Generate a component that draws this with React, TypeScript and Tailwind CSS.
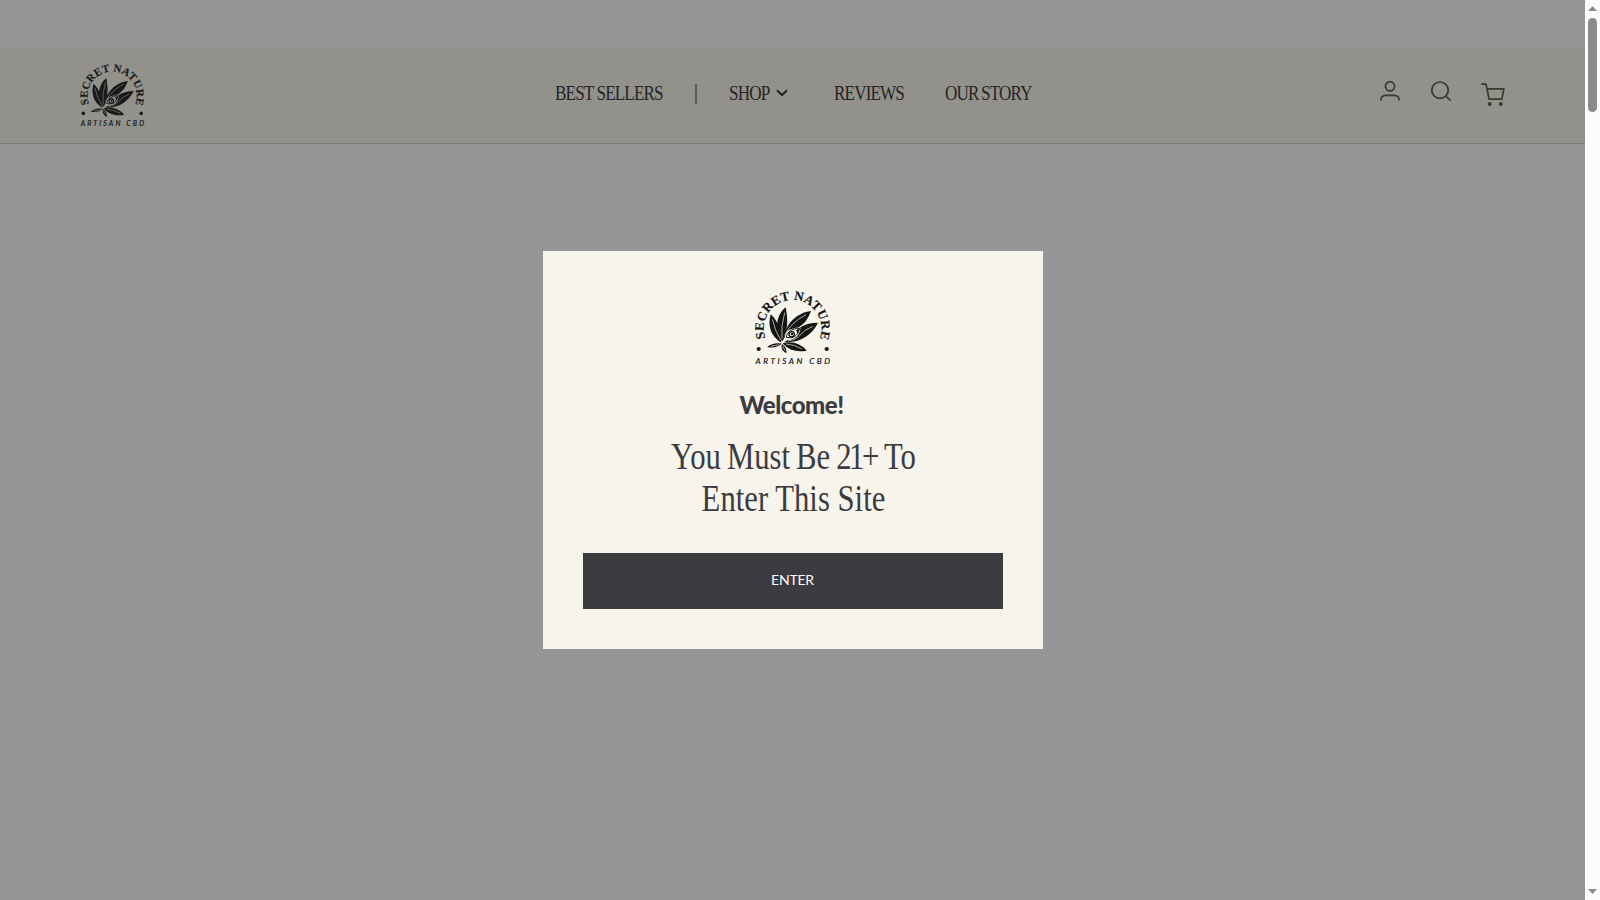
import { clsx } from 'clsx';

interface LogoProps {
  id: string;
  className?: string;
}

function Logo({ id, className }: LogoProps) {
  return (
    <svg viewBox="0 0 76 74" className={clsx('overflow-visible', className)} fill="currentColor">
      <path id={id} d="M10.4 47.2 A28.8 28.8 0 1 1 64.8 47.2" fill="none" />
      <text className="font-['Liberation_Serif'] text-[12.8px] font-bold" stroke="currentColor" strokeWidth="0.2">
        <textPath href={`#${id}`} textLength="110">
          SECRET NATURE
        </textPath>
      </text>
      <circle cx="3.7" cy="58" r="2.1" />
      <circle cx="71.7" cy="58" r="2.1" />

      {/* Leaf */}
      <g transform="scale(0.3333) translate(-45 -33)">
        <path d="M92 103 C83 135 90 168 124 188 C124 155 114 122 92 103Z" />
        <path d="M137 82 C108 105 102 150 127 184 C143 155 145 120 137 82Z" />
        <path d="M213 93 C172 98 134 130 130 182 C134 172 136 162 140 156 C149 144 166 146 178 140 C196 130 206 112 213 93Z" />
        <path d="M234 128 C214 128 196 132 181 142 C183 158 170 177 150 180 C142 180 138 182 133 186 C180 190 215 165 234 128Z" />
        <path d="M128 190 C150 181 184 190 200 212 C170 218 145 210 128 190Z" />
        <path d="M82 201 C94 190 110 188 125 191 C114 201 98 205 82 201Z" />
        <path d="M126 192 C122 203 127 214 139 220 C141 208 136 199 126 192Z" />

        {/* Eye */}
        <path d="M139 172 C141 154 156 147 178 144 C176 163 162 178 139 172Z" fill="none" stroke="currentColor" strokeWidth="3" />
        <circle cx="155" cy="163" r="8" fill="none" stroke="currentColor" strokeWidth="4" />
        <circle cx="156" cy="162" r="4" />
        <path d="M168 151 L180 144 L174 162Z" />
      </g>
      <g transform="scale(0.3333) translate(-45 -33)" fill="none" className="stroke-[var(--vein)]" strokeWidth="2">
        <path d="M97 118 Q106 155 122 180 M134 98 Q122 140 126 176 M198 104 Q150 130 134 166 M218 139 Q192 150 184 162 Q168 180 144 183 M138 192 Q165 194 186 207 M92 199 L118 194 M128 198 L135 212" />
      </g>

      <text
        x="0.6"
        y="73"
        textLength="74.5"
        stroke="currentColor"
        strokeWidth="0.2"
        className="font-[Lato] text-[8.2px] italic"
      >
        ARTISAN CBD
      </text>
    </svg>
  );
}

interface NavLabelProps {
  label: string;
  width: string;
}

// Condensed serif label, squeezed into its own box
function NavLabel({ label, width }: NavLabelProps) {
  return (
    <a href="#" className={clsx('block whitespace-nowrap tracking-[-1px]', width)}>
      <span className="inline-block origin-left scale-x-[0.855]">{label}</span>
    </a>
  );
}

function Header() {
  return (
    <header className="h-24 shrink-0 flex items-center justify-between border-b border-[#7f7c70] bg-[#92918b] pl-20 pr-20">
      <Logo id="header-arc" className="w-[65px] h-[63px] text-[#191919] [--vein:#92918b]" />

      <nav className="flex items-center ml-[61px] -mt-[5px] font-['Liberation_Serif'] text-[20px] leading-6 text-[#242427]">
        <NavLabel label="BEST SELLERS" width="w-[108px]" />
        <span className="mt-[2px] mx-8 h-5 w-[2px] bg-[#59595a]" />
        <NavLabel label="SHOP" width="w-[40px]" />
        <svg viewBox="0 0 12 8" className="ml-[7px] w-3 h-2" fill="none" stroke="currentColor" strokeWidth="2">
          <path d="M1 1.2 L6 6 L11 1.2" />
        </svg>
        <NavLabel label="REVIEWS" width="ml-[46px] w-[70px]" />
        <NavLabel label="OUR STORY" width="ml-[41px] w-[86px] [word-spacing:-1px]" />
      </nav>

      <div className="-mt-1 flex items-start text-[#3a382d]">
        <svg viewBox="0 0 20 20" className="w-5 h-5" fill="none" stroke="currentColor" strokeWidth="1.7">
          <circle cx="10" cy="5.3" r="4.6" />
          <path d="M0.9 19.4 V18.7 A4.4 4.4 0 0 1 5.3 14.3 H14.7 A4.4 4.4 0 0 1 19.1 18.7 V19.4" />
        </svg>
        <svg viewBox="0 0 20 20" className="ml-[31px] w-5 h-5" fill="none" stroke="currentColor" strokeWidth="1.7">
          <circle cx="9" cy="9.2" r="8.2" />
          <path d="M14.8 15 L19.5 19.5" />
        </svg>
        <svg viewBox="0 0 24 24" className="mt-[2px] ml-[30px] w-6 h-6" fill="none" stroke="currentColor" strokeWidth="1.7" strokeLinejoin="round">
          <path d="M0.3 1.2 H5 L8.1 16.2 H20.8 L22.9 5.8 H6" />
          <circle cx="8.8" cy="21" r="1.9" fill="currentColor" stroke="none" />
          <circle cx="19.8" cy="21" r="1.9" fill="currentColor" stroke="none" />
        </svg>
      </div>
    </header>
  );
}

function AgeGate() {
  return (
    <div className="absolute inset-0 flex items-center justify-center">
      <div className="w-[500px] h-[398px] flex flex-col items-center bg-[#f7f4ec] px-10 pt-10 text-[#3c3b40]">
        <Logo id="modal-arc" className="w-[76px] h-[74px] text-[#151515] [--vein:#f7f4ec]" />
        <h2 className="mt-6 mr-[2px] font-[Lato] text-[24px] leading-8 font-black tracking-[-0.5px] whitespace-nowrap">
          Welcome!
        </h2>
        <h1 className="mt-[15px] ml-px scale-x-[0.83] font-['Liberation_Serif'] text-[37px] leading-[42px] text-center whitespace-nowrap">
          <span className="[word-spacing:-2px]">
            You Must Be <span className="tracking-[-3px]">21</span>
            <span className="tracking-[-1px]">+</span> To
          </span>
          <br />
          Enter This Site
        </h1>
        <button className="mt-[33px] w-full h-14 bg-[#3c3b40] pb-1 font-[Lato] text-[14px] tracking-[-0.2px] text-white">
          ENTER
        </button>
      </div>
    </div>
  );
}

function Scrollbar() {
  return (
    <div className="w-[15px] flex flex-col items-center bg-[#fcfcfc] py-[6px] text-[#8b8b8b]">
      <svg viewBox="0 0 9 5" className="w-[9px] h-[5px]" fill="currentColor">
        <path d="M4.5 0 L9 5 H0Z" />
      </svg>
      <div className="mt-[7px] w-[9px] h-[94px] rounded-full bg-[#8b8b8b]" />
      <svg viewBox="0 0 9 5" className="mt-auto w-[9px] h-[5px]" fill="currentColor">
        <path d="M0 0 H9 L4.5 5Z" />
      </svg>
    </div>
  );
}

export default function App() {
  return (
    <div className="flex w-full h-screen overflow-hidden bg-[#969696]">
      <div className="relative flex-1 flex flex-col">
        <div className="h-12 shrink-0" />
        <Header />
        <AgeGate />
      </div>
      <Scrollbar />
    </div>
  );
}
